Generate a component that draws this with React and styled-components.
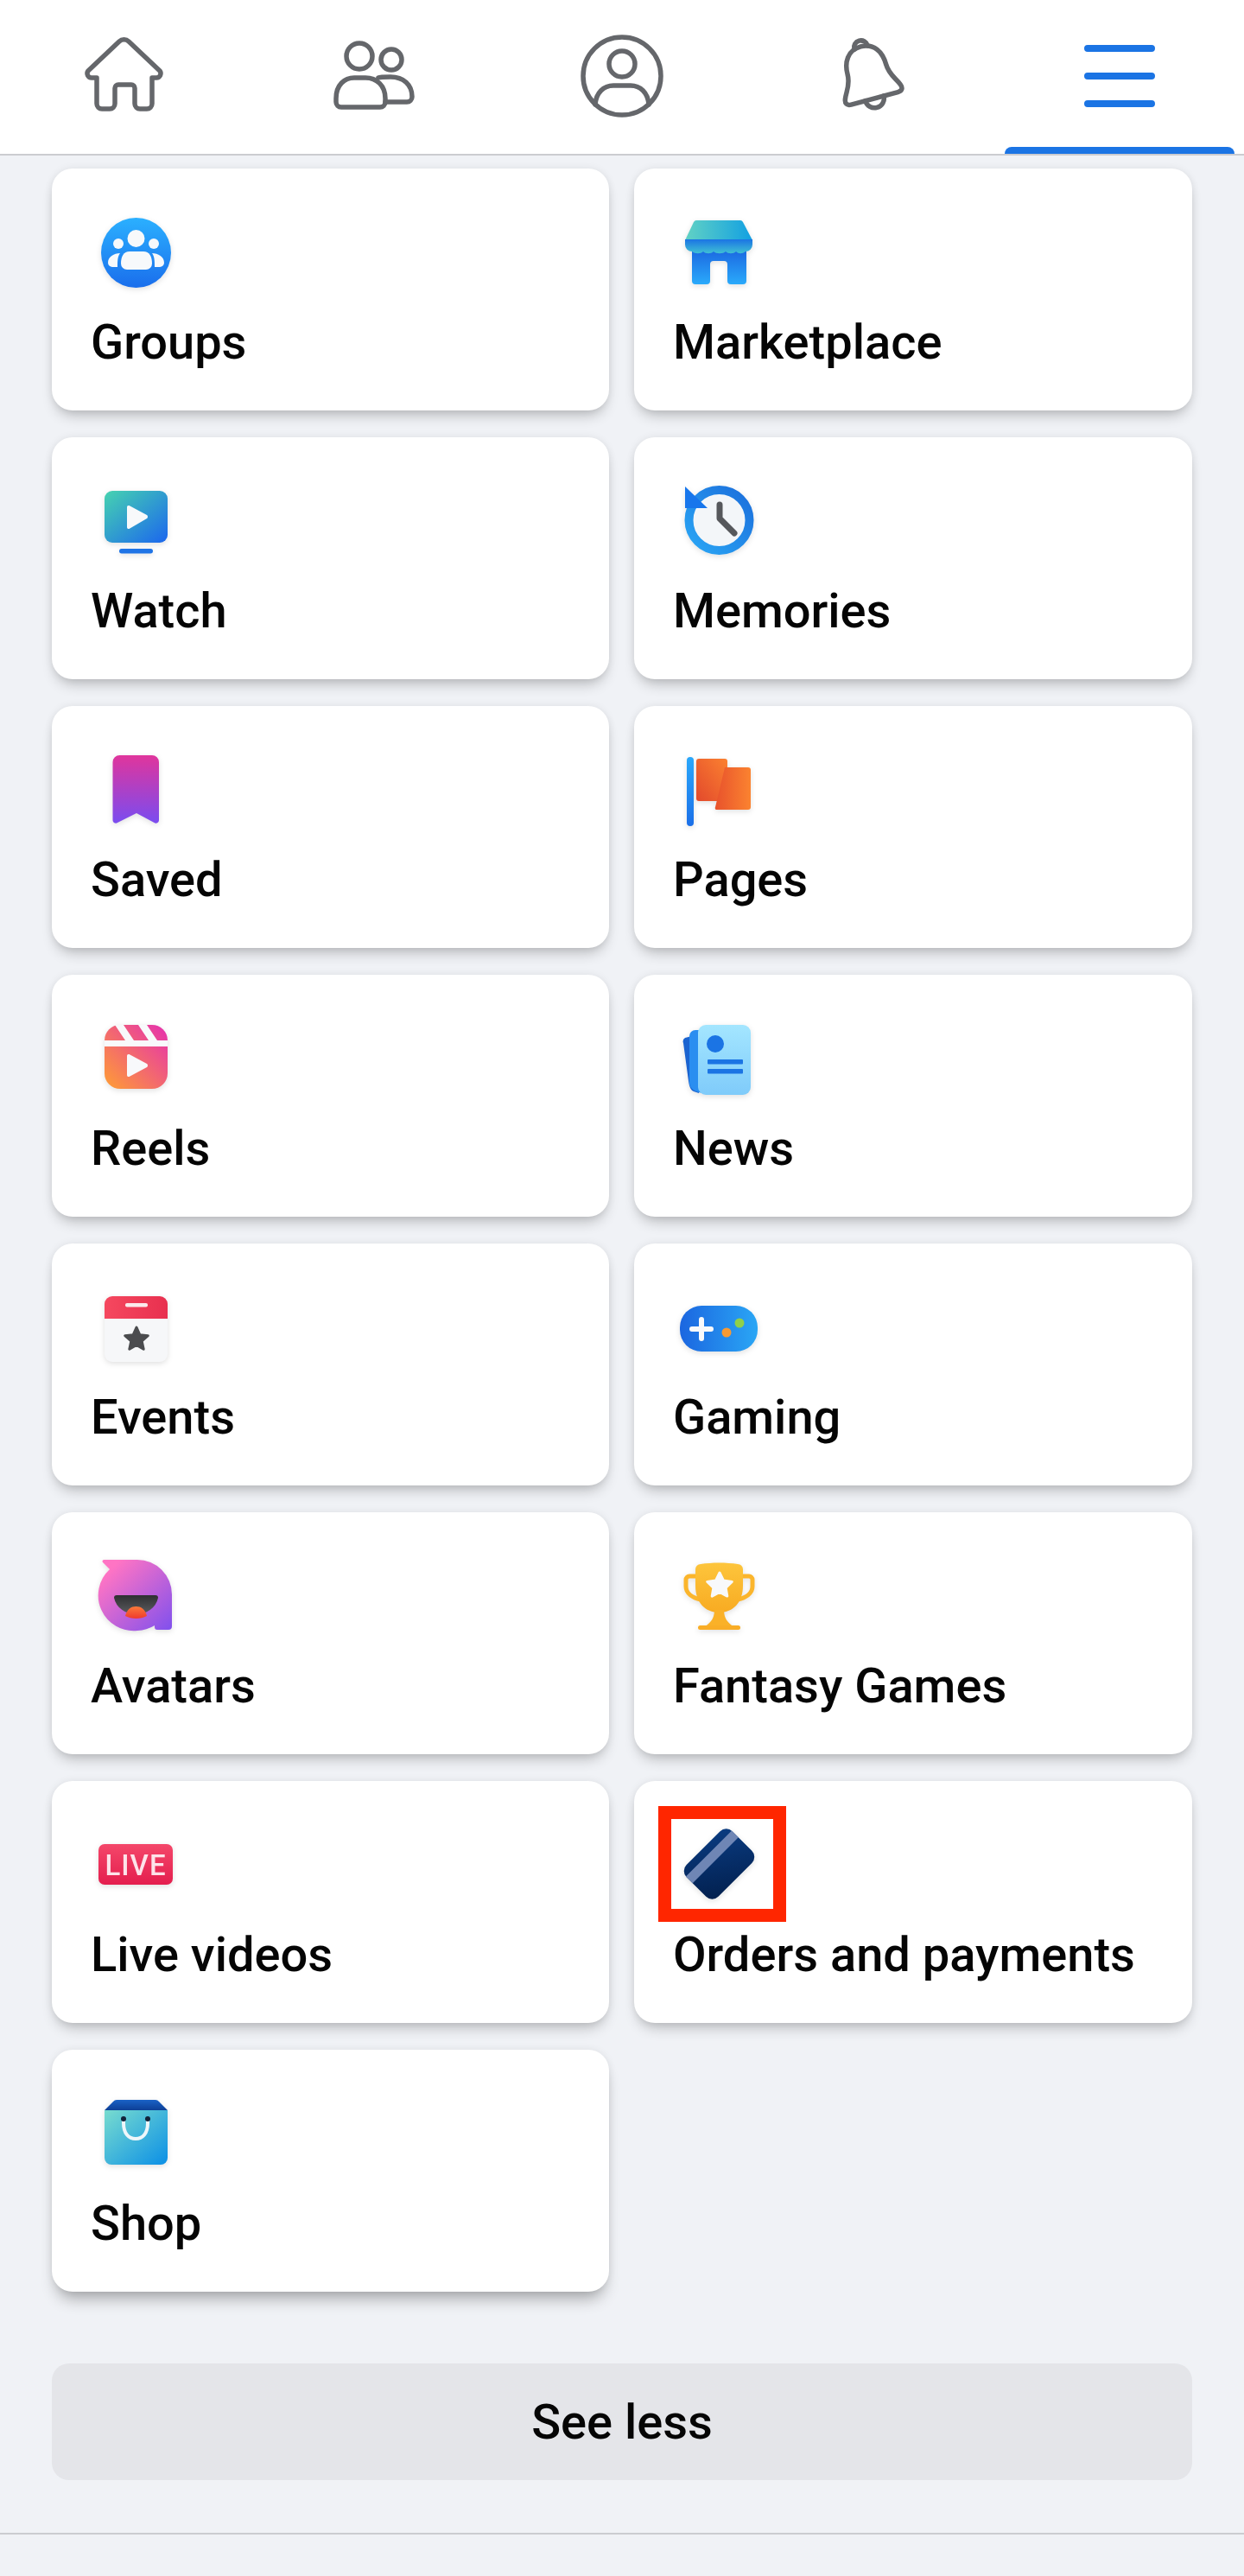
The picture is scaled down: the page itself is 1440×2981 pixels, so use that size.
import React from "react";
import styled, { createGlobalStyle } from "styled-components";

const GlobalStyle = createGlobalStyle`
    html, body {
        margin: 0;
        padding: 0;
        background: #f0f2f6;
    }
    * {
        box-sizing: border-box;
    }
`;

const Page = styled.div`
    width: 1440px;
    height: 2981px;
    overflow: hidden;
    background: #f0f2f6;
    font-family: Roboto, "Liberation Sans", sans-serif;
`;

const TopBar = styled.nav`
    display: flex;
    height: 180px;
    background: #ffffff;
    border-bottom: 2px solid #cbccd0;
`;

const Tab = styled.div`
    position: relative;
    flex: 1;
    display: flex;
    align-items: center;
    justify-content: center;
    padding-bottom: 6px;
    color: ${(p) => (p.$active ? "#1b74e4" : "#65676b")};
    ${(p) =>
        p.$active &&
        `&::after {
            content: "";
            position: absolute;
            left: 11px;
            right: 11px;
            bottom: 0;
            height: 8px;
            background: #1b74e4;
            border-radius: 8px 8px 0 0;
        }`}
`;

const TabSvg = styled.svg`
    width: 100px;
    height: 100px;
    fill: none;
    stroke: currentColor;
    stroke-width: ${(p) => p.$weight || 5.5};
    stroke-linecap: round;
    stroke-linejoin: round;
`;

const Content = styled.main`
    padding: 15px 60px 0;
`;

const Grid = styled.div`
    display: grid;
    grid-template-columns: 645px 646px;
    grid-auto-rows: 280px;
    column-gap: 29px;
    row-gap: 31px;
`;

const Card = styled.div`
    position: relative;
    padding: 49px 45px 0;
    background: #ffffff;
    border-radius: 24px;
    box-shadow: ${(p) =>
        p.$raised
            ? "0 14px 18px -6px rgba(0, 0, 0, 0.3), 0 0 10px rgba(0, 0, 0, 0.08)"
            : "0 10px 16px -5px rgba(0, 0, 0, 0.24), 0 0 10px rgba(0, 0, 0, 0.08)"};
`;

const IconSvg = styled.svg`
    display: block;
    width: 96px;
    height: 96px;
    overflow: visible;
    filter: drop-shadow(0 2px 3px rgba(0, 0, 0, 0.12));
`;

const Label = styled.div`
    margin-top: 24px;
    font-size: 56px;
    line-height: 64px;
    font-weight: 500;
    color: #050505;
    white-space: nowrap;
`;

const Highlight = styled.div`
    position: absolute;
    left: 28px;
    top: 29px;
    width: 148px;
    height: 134px;
    border: 15px solid #ff2600;
`;

const SeeLess = styled.div`
    display: flex;
    align-items: center;
    justify-content: center;
    height: 135px;
    margin-top: 83px;
    background: #e4e5e9;
    border-radius: 20px;
    font-size: 56px;
    font-weight: 500;
    color: #050505;
`;

const Divider = styled.div`
    height: 2px;
    margin-top: 61px;
    background: #cbccd0;
`;

const HomeTab = () => (
    <TabSvg viewBox="0 0 100 100">
        <path d="M18 54 V84 a6 6 0 0 0 6 6 H33 a6 6 0 0 0 6-6 V66 a4 4 0 0 1 4-4 H58 a4 4 0 0 1 4 4 V84 a6 6 0 0 0 6 6 H76 a6 6 0 0 0 6-6 V54 H87 a5 5 0 0 0 4-8 L55 12 a8 8 0 0 0-11 0 L8 46 a5 5 0 0 0 4 8 Z" />
    </TabSvg>
);

const FriendsTab = () => (
    <TabSvg viewBox="0 0 100 100">
        <circle cx="34" cy="29" r="15" />
        <circle cx="71" cy="33" r="12" />
        <path d="M7 78 C7 62 17 54 28 54 H41 C54 54 64 63 64 78 V82 a6 6 0 0 1-6 6 H13 a6 6 0 0 1-6-6 Z" />
        <path d="M56 54 C58 53 62 53 70 53 C85 53 95 62 95 76 a6 6 0 0 1-6 6 H64" />
    </TabSvg>
);

const ProfileTab = () => (
    <TabSvg viewBox="0 0 100 100">
        <circle cx="50" cy="52" r="45" />
        <circle cx="50" cy="38" r="15" />
        <path d="M19 85 C20 71 29 63 40 63 H60 C71 63 80 71 81 85" />
    </TabSvg>
);

const BellTab = () => (
    <TabSvg viewBox="0 0 100 100">
        <g transform="rotate(-15 50 50) translate(-3 0)">
            <path d="M50 16 C34 16 27 29 27 43 C27 56 20 62 17 70 C15 75 17 78 22 78 H78 C83 78 85 75 83 70 C80 62 73 56 73 43 C73 29 66 16 50 16 Z" />
            <path d="M39 78 a11 11 0 0 0 22 0" />
            <path d="M42 17 a8 8 0 0 1 16 0" />
        </g>
    </TabSvg>
);

const MenuTab = () => (
    <TabSvg viewBox="0 0 100 100" $weight={8}>
        <path d="M13 20 H87 M13 52 H87 M13 84 H87" />
    </TabSvg>
);

const Grad = ({ id, x1 = 0, y1 = 0, x2 = 0, y2 = 1, from, to }) => (
    <linearGradient id={id} x1={x1} y1={y1} x2={x2} y2={y2}>
        <stop offset="0" stopColor={from} />
        <stop offset="1" stopColor={to} />
    </linearGradient>
);

const starPoints = (cx, cy, outer, inner) => {
    const pts = [];
    for (let i = 0; i < 10; i++) {
        const r = i % 2 === 0 ? outer : inner;
        const a = -Math.PI / 2 + (i * Math.PI) / 5;
        pts.push(`${(cx + r * Math.cos(a)).toFixed(1)},${(cy + r * Math.sin(a)).toFixed(1)}`);
    }
    return pts.join(" ");
};

const GroupsIcon = () => (
    <IconSvg viewBox="0 0 96 96">
        <defs>
            <Grad id="groups" from="#2bb0ff" to="#1a6eec" />
        </defs>
        <circle cx="52.5" cy="48.5" r="40.5" fill="url(#groups)" />
        <g fill="#f7f9fb">
            <circle cx="52.5" cy="32" r="10" />
            <circle cx="32" cy="38" r="6" />
            <circle cx="73" cy="38" r="6" />
            <path d="M45 47 H61 C68 47 71 53 71 61 a7 7 0 0 1-7 7 H42 a7 7 0 0 1-7-7 C35 53 38 47 45 47 Z" />
            <path d="M34 49 C27 49 20 53 20 60 a5 5 0 0 0 5 5 H31 C31 58 31 53 34 49 Z" />
            <path d="M71 49 C78 49 85 53 85 60 a5 5 0 0 1-5 5 H74 C74 58 74 53 71 49 Z" />
        </g>
    </IconSvg>
);

const MarketplaceIcon = () => (
    <IconSvg viewBox="0 0 96 96">
        <defs>
            <Grad id="awning" x2={1} y2={0} from="#62d2c4" to="#12a0e2" />
            <Grad id="shopBody" from="#1b66e0" to="#2aaafb" />
            <Grad id="band" from="#1b74e4" to="#3fc0d4" />
        </defs>
        <path d="M22 44 H85 V81 a4 4 0 0 1-4 4 H67 a4 4 0 0 1-4-4 V62 a4 4 0 0 0-4-4 H47 a4 4 0 0 0-4 4 V81 a4 4 0 0 1-4 4 H26 a4 4 0 0 1-4-4 Z" fill="url(#shopBody)" />
        <path d="M27 11 H78 a4 4 0 0 1 3 2 L92 34 V36 H14 V34 L24 13 a4 4 0 0 1 3-2 Z" fill="url(#awning)" />
        <path d="M14 33 H92 V39 a8 8 0 0 1-8 8 C80 50 76 50 73 47 C70 50 64 50 61 47 C58 50 50 50 47 47 C44 50 38 50 35 47 C32 50 26 50 22 47 a8 8 0 0 1-8-8 Z" fill="url(#band)" />
    </IconSvg>
);

const WatchIcon = () => (
    <IconSvg viewBox="0 0 96 96">
        <defs>
            <Grad id="watch" x2={1} from="#46d3b0" to="#1b66ee" />
        </defs>
        <rect x="16" y="13" width="73" height="60" rx="9" fill="url(#watch)" />
        <rect x="33" y="80" width="39" height="5.5" rx="2.7" fill="#1f74e6" />
        <path d="M44.5 30 L65 41 a2.5 2.5 0 0 1 0 4 L44.5 57 a2 2 0 0 1-2.5-2 V32 a2 2 0 0 1 2.5-2 Z" fill="#f8f9fb" />
    </IconSvg>
);

const MemoriesIcon = () => (
    <IconSvg viewBox="0 0 96 96">
        <defs>
            <Grad id="memories" x1={1} x2={0} from="#1b6fdc" to="#2aa6f5" />
        </defs>
        <circle cx="53.5" cy="47" r="35" fill="#f3f6f9" stroke="url(#memories)" strokeWidth="10" />
        <path d="M14 8 L40 33 H14 Z" fill="#1776ec" />
        <path d="M54 29 V45 L71 62" fill="none" stroke="#56585c" strokeWidth="7" strokeLinecap="round" strokeLinejoin="round" />
    </IconSvg>
);

const SavedIcon = () => (
    <IconSvg viewBox="0 0 96 96">
        <defs>
            <Grad id="saved" from="#e0359c" to="#7a4cf0" />
        </defs>
        <path d="M33 8 H71 a8 8 0 0 1 8 8 V83 a3.5 3.5 0 0 1-5.5 3 L53 75 L31 86 a3.5 3.5 0 0 1-5.5-3 V16 a8 8 0 0 1 8-8 Z" fill="url(#saved)" />
    </IconSvg>
);

const PagesIcon = () => (
    <IconSvg viewBox="0 0 96 96">
        <defs>
            <Grad id="pole" from="#2aa8fb" to="#1b6fe8" />
            <Grad id="flagA" x1={1} x2={0} y2={1} from="#fb8130" to="#e2492c" />
            <Grad id="flagB" x2={1} y2={0} from="#e8522c" to="#fb8330" />
        </defs>
        <rect x="16" y="10" width="8" height="80" rx="4" fill="url(#pole)" />
        <path d="M30 12 H60 a3 3 0 0 1 3 3 V61 H30 a3 3 0 0 1-3-3 V15 a3 3 0 0 1 3-3 Z" fill="url(#flagA)" />
        <path d="M60 22 H87 a3 3 0 0 1 3 3 V68 a3 3 0 0 1-3 3 H51 a2 2 0 0 1-2-3 Z" fill="url(#flagB)" />
    </IconSvg>
);

const ReelsIcon = () => (
    <IconSvg viewBox="0 0 96 96">
        <defs>
            <Grad id="reels" x1={0} y1={1} x2={1} y2={0} from="#ff9e33" to="#e52fb0" />
        </defs>
        <rect x="16" y="9" width="73" height="74" rx="18" fill="url(#reels)" />
        <rect x="16" y="27" width="73" height="7" fill="#f8f9fb" />
        <path d="M28 9 H38 L50 27 H40 Z M55 9 H65 L77 27 H67 Z" fill="#f8f9fb" />
        <path d="M44.5 43 L65 54 a2.5 2.5 0 0 1 0 4 L44.5 69 a2 2 0 0 1-2.5-2 V45 a2 2 0 0 1 2.5-2 Z" fill="#f8f9fb" />
    </IconSvg>
);

const NewsIcon = () => (
    <IconSvg viewBox="0 0 96 96">
        <defs>
            <Grad id="newsFront" from="#a4e6ff" to="#7fcbfa" />
        </defs>
        <path d="M14 24 L30 20 V88 L24 86 C20 84 19 80 18 74 L12 30 a5 5 0 0 1 2-6 Z" fill="#1a63d0" />
        <path d="M26 15 H38 V88 C28 88 19 84 19 76 V22 a7 7 0 0 1 7-7 Z" fill="#2a8ef0" />
        <rect x="29" y="9" width="61" height="81" rx="9" fill="url(#newsFront)" />
        <circle cx="49" cy="31" r="10" fill="#1b74e4" />
        <rect x="40" y="49" width="41" height="5.5" rx="1" fill="#1b74e4" />
        <rect x="40" y="60" width="41" height="5.5" rx="1" fill="#1b74e4" />
    </IconSvg>
);

const EventsIcon = () => (
    <IconSvg viewBox="0 0 96 96">
        <defs>
            <Grad id="eventsTop" x2={1} y2={0} from="#f5485f" to="#e8304f" />
        </defs>
        <rect x="16" y="12" width="73" height="76" rx="9" fill="#f6f7f9" />
        <path d="M25 12 H80 a9 9 0 0 1 9 9 V38 H16 V21 a9 9 0 0 1 9-9 Z" fill="url(#eventsTop)" />
        <rect x="40" y="20" width="26" height="4.5" rx="2" fill="#fbeaec" />
        <polygon points={starPoints(53, 62, 14, 6.5)} fill="#4b4c4f" stroke="#4b4c4f" strokeWidth="3" strokeLinejoin="round" />
    </IconSvg>
);

const GamingIcon = () => (
    <IconSvg viewBox="0 0 96 96">
        <defs>
            <Grad id="gaming" x2={1} y2={0} from="#1b66e0" to="#2aa6f5" />
        </defs>
        <rect x="8" y="23" width="90" height="53" rx="25" fill="url(#gaming)" />
        <path d="M22 50 H44 M33 39 V61" stroke="#f8f9fb" strokeWidth="6" strokeLinecap="round" />
        <circle cx="62" cy="54" r="5.5" fill="#f79a33" />
        <circle cx="77" cy="43" r="5.5" fill="#8fd04a" />
    </IconSvg>
);

const AvatarsIcon = () => (
    <IconSvg viewBox="0 0 96 96">
        <defs>
            <Grad id="avatars" x1={0.15} y1={0.15} x2={1} y2={1} from="#ff74c4" to="#7f50ee" />
            <Grad id="mouth" from="#2e2f31" to="#5c5d60" />
            <Grad id="tongue" from="#fb7a3a" to="#ef3a2c" />
        </defs>
        <path d="M15 6 H54 A40 40 0 0 1 94 46 V83 a4 4 0 0 1-4 4 H77 a3 3 0 0 1-3-3 V82 A41 41 0 0 1 54 88 A41 41 0 0 1 22 17 L14 9 a2 2 0 0 1 1-3 Z" fill="url(#avatars)" />
        <path d="M30 47 H75 a3 3 0 0 1 3 3 A26 24 0 0 1 27 50 a3 3 0 0 1 3-3 Z" fill="url(#mouth)" />
        <path d="M40 71 C42 63 47 60 52.5 60 C58 60 63 63 65 71 C58 75 47 75 40 71 Z" fill="url(#tongue)" />
    </IconSvg>
);

const TrophyIcon = () => (
    <IconSvg viewBox="0 0 96 96">
        <defs>
            <Grad id="trophy" from="#fdc53c" to="#f8ab22" />
        </defs>
        <path d="M26 25 H19 a4 4 0 0 0-4 4 V37 C15 45 23 50 32 52 M81 25 H88 a4 4 0 0 1 4 4 V37 C92 45 84 50 75 52" fill="none" stroke="#fbb52c" strokeWidth="5" strokeLinecap="round" />
        <path d="M32 11 C45 9 62 9 75 11 a6 6 0 0 1 6 6 V36 C81 55 70 67 53.5 67 C37 67 26 55 26 36 V17 a6 6 0 0 1 6-6 Z" fill="url(#trophy)" />
        <path d="M48 64 H59 C59 73 63 79 70 83 H37 C44 79 48 73 48 64 Z" fill="#fab128" />
        <rect x="29" y="82" width="49" height="5" rx="2.5" fill="#f9ad26" />
        <polygon points={starPoints(54, 36, 15, 7.5)} fill="#f8f9fb" stroke="#f8f9fb" strokeWidth="3" strokeLinejoin="round" />
    </IconSvg>
);

const LiveIcon = () => (
    <IconSvg viewBox="0 0 96 96">
        <defs>
            <Grad id="live" from="#f4476a" to="#e41e4e" />
        </defs>
        <rect x="9" y="24" width="86" height="47" rx="7" fill="url(#live)" />
        <text x="52" y="60" textAnchor="middle" fontFamily="Roboto, sans-serif" fontWeight="500" fontSize="33" letterSpacing="1" fill="#fde3ea">
            LIVE
        </text>
    </IconSvg>
);

const OrdersIcon = () => (
    <IconSvg viewBox="0 0 96 96">
        <defs>
            <Grad id="orders" x1={1} y1={0} x2={0} y2={1} from="#0a3c82" to="#021f4d" />
        </defs>
        <g transform="rotate(-45 53.5 47)">
            <rect x="16" y="21" width="75" height="52" rx="10" fill="url(#orders)" />
            <rect x="16" y="30" width="75" height="11" fill="#6f86b5" />
        </g>
    </IconSvg>
);

const ShopIcon = () => (
    <IconSvg viewBox="0 0 96 96">
        <defs>
            <Grad id="shop" x2={1} from="#78dccf" to="#0b8fe6" />
            <Grad id="shopTop" from="#1a62c6" to="#0c3f96" />
        </defs>
        <path d="M16 21 H89 V76 a8 8 0 0 1-8 8 H24 a8 8 0 0 1-8-8 Z" fill="url(#shop)" />
        <path d="M30 9 H75 a5 5 0 0 1 4 2 L89 21 H16 L26 11 a5 5 0 0 1 4-2 Z" fill="url(#shopTop)" />
        <path d="M38 33 V36 C38 48 44 54 52 54 C60 54 66 48 66 36 V33" fill="none" stroke="#eef6fa" strokeWidth="4" strokeLinecap="round" />
        <circle cx="38" cy="31" r="3" fill="#12233a" />
        <circle cx="66" cy="31" r="3" fill="#12233a" />
    </IconSvg>
);

const items = [
    { label: "Groups", Icon: GroupsIcon },
    { label: "Marketplace", Icon: MarketplaceIcon },
    { label: "Watch", Icon: WatchIcon },
    { label: "Memories", Icon: MemoriesIcon },
    { label: "Saved", Icon: SavedIcon },
    { label: "Pages", Icon: PagesIcon },
    { label: "Reels", Icon: ReelsIcon },
    { label: "News", Icon: NewsIcon },
    { label: "Events", Icon: EventsIcon },
    { label: "Gaming", Icon: GamingIcon },
    { label: "Avatars", Icon: AvatarsIcon },
    { label: "Fantasy Games", Icon: TrophyIcon },
    { label: "Live videos", Icon: LiveIcon },
    { label: "Orders and payments", Icon: OrdersIcon, marked: true },
    { label: "Shop", Icon: ShopIcon, raised: true },
];

const App = () => {
    return (
        <Page>
            <GlobalStyle />
            <TopBar>
                <Tab><HomeTab /></Tab>
                <Tab><FriendsTab /></Tab>
                <Tab><ProfileTab /></Tab>
                <Tab><BellTab /></Tab>
                <Tab $active><MenuTab /></Tab>
            </TopBar>
            <Content>
                <Grid>
                    {items.map(({ label, Icon, marked, raised }) => (
                        <Card key={label} $raised={raised}>
                            <Icon />
                            <Label>{label}</Label>
                            {marked && <Highlight />}
                        </Card>
                    ))}
                </Grid>
                <SeeLess>See less</SeeLess>
            </Content>
            <Divider />
        </Page>
    );
};

export default App;
